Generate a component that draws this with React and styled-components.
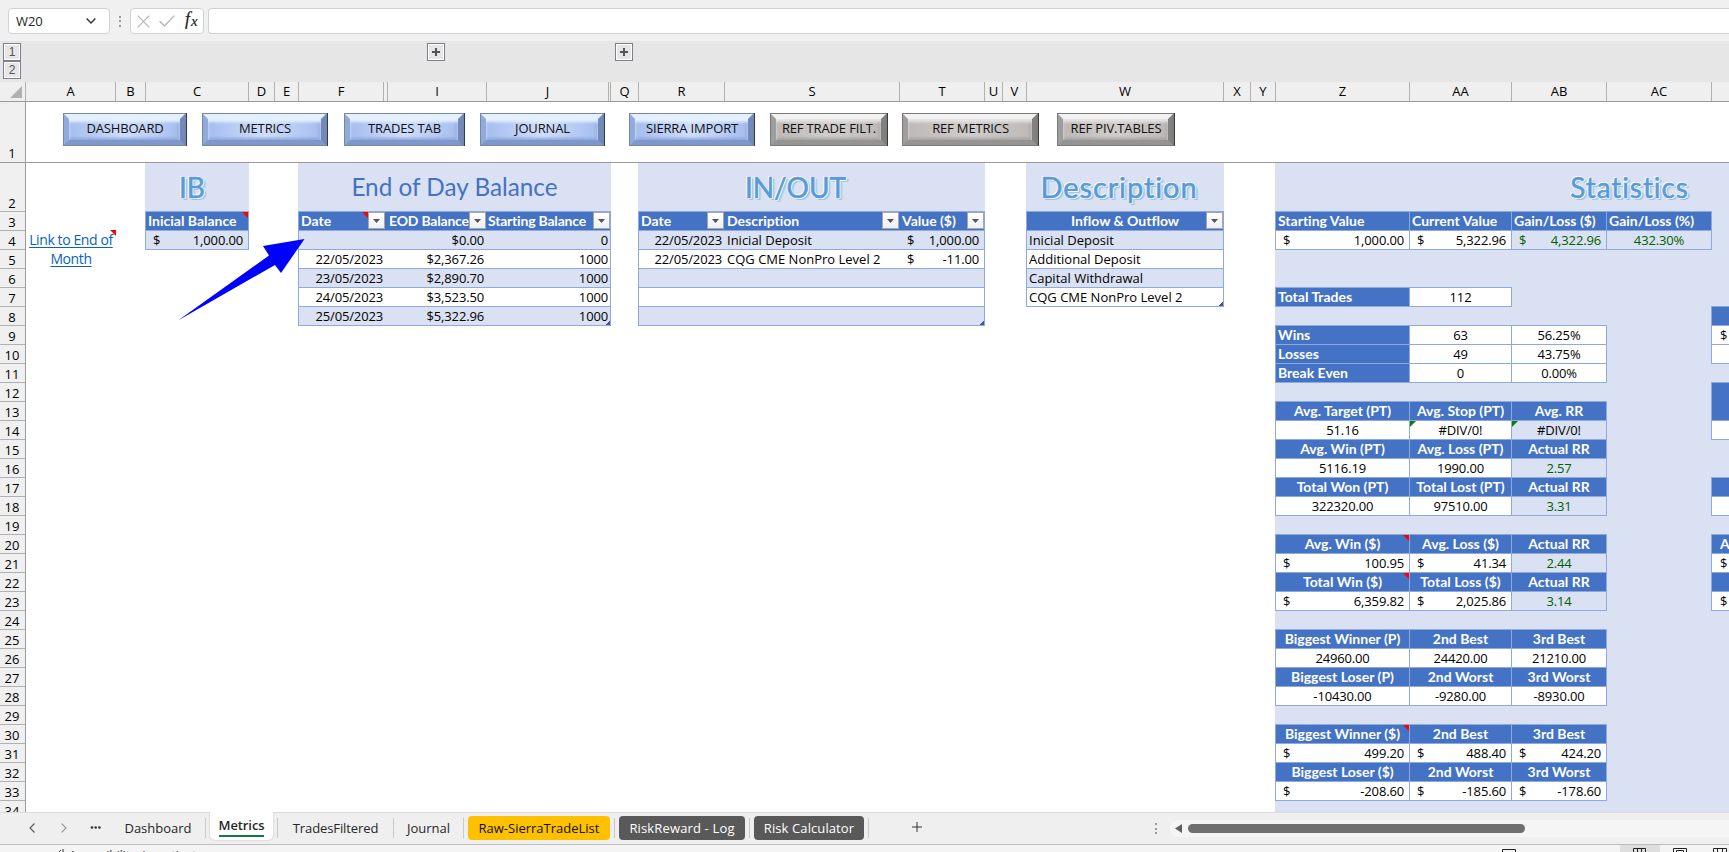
import React from "react";
import styled, { createGlobalStyle, css } from "styled-components";

const BLUE = "#4472c4";
const PALE = "#d9e1f2";
const LINE = "#8ea9db";

const GlobalStyle = createGlobalStyle`
  * { box-sizing: border-box; }
  body {
    margin: 0;
    overflow: hidden;
    background: #fff;
    font-family: "Open Sans", "Noto Sans", sans-serif;
    font-size: 13px;
    color: #000;
  }
`;

const Window = styled.div`
  display: flex;
  flex-direction: column;
  width: 100vw;
  height: 852px;
  overflow: hidden;
`;

/* formula bar */
const FormulaBar = styled.div`
  display: flex;
  height: 41px;
  flex: none;
  padding: 8px 0 7px 8px;
  background: #f0f0f0;
`;
const Field = styled.div`
  display: flex;
  align-items: center;
  justify-content: space-between;
  width: ${({ $w }) => $w}px;
  flex: none;
  height: 26px;
  background: #fff;
  border: 1px solid #d1d1d1;
  border-radius: 4px;
`;
const NameBox = styled(Field)`
  padding: 0 13px 0 7px;
  font-size: 13px;
  letter-spacing: -0.1px;
  color: #262626;
`;
const FxBox = styled(Field)`
  padding: 0 4px 0 6px;
`;
const FormulaInput = styled(Field)`
  flex: 1;
  margin-left: 4px;
  border-right: none;
  border-radius: 4px 0 0 4px;
`;
const Grip = styled.div`
  display: flex;
  flex-direction: column;
  justify-content: center;
  align-items: center;
  gap: 2.5px;
  width: ${({ $w }) => $w}px;
  flex: none;
  i {
    width: 2px;
    height: 2px;
    background: #999;
  }
`;

/* outline strip over the column headers */
const Outline = styled.div`
  display: flex;
  align-items: flex-start;
  height: 41px;
  flex: none;
  padding: 2px 0 0 3px;
  background: #e6e6e6;
`;
const Levels = styled.div`
  display: flex;
  flex-direction: column;
  width: 18px;
`;
const OutlineButton = styled.div`
  display: flex;
  align-items: center;
  justify-content: center;
  width: 18px;
  height: 18px;
  flex: none;
  margin-left: ${({ $gap = 0 }) => $gap}px;
  border: 1px solid #7b808a;
  box-shadow: inset 0 0 0 1px #fff;
  font: 12px "Liberation Sans", sans-serif;
  color: #555;
`;

const columns = "25px 1px 90px 30px 103px 26px 24px 85px 4px 99px 122px 2px 28px 86px 175px 85px 18px 24px 197px 27px 25px 134px 102px 95px 105px 90px";

const ColumnHeads = styled.div`
  display: grid;
  grid-template-columns: ${columns};
  height: 20px;
  flex: none;
  background: #efefef;
  border-bottom: 1px solid #9b9b9b;
`;
const ColumnHead = styled.div`
  text-align: center;
  line-height: 19px;
  border-right: 1px solid #b1b1b1;
  overflow: hidden;
`;
const Corner = styled.div`
  grid-column: span 2;
  display: flex;
  justify-content: flex-end;
  align-items: flex-end;
  padding: 0 3px 3px 0;
  border-right: 1px solid #b1b1b1;
`;

const FrozenRow = styled.div`
  display: flex;
  height: 61px;
  flex: none;
  border-bottom: 1px solid #9b9b9b;
`;
const RowHead = styled.div`
  display: flex;
  align-items: flex-end;
  justify-content: center;
  width: 26px;
  flex: none;
  height: ${({ $h = 19 }) => $h}px;
  padding-right: 1px;
  line-height: 18px;
  background: #f0f0f0;
  border-right: 1px solid #9b9b9b;
  border-bottom: ${({ $frozen }) => ($frozen ? "none" : "1px solid #b1b1b1")};
  span { margin-bottom: ${({ $frozen }) => ($frozen ? 0 : -1)}px; }
`;
const ButtonStrip = styled.div`
  display: flex;
  align-items: flex-start;
  padding: 11px 0 0 37px;
`;
const tones = {
  blue: css`
    background: linear-gradient(90deg, #a5bdee, #d0defb 50%, #a5bdee);
    border-color: #e2f0ff #7189bb #7f98cb #92abde;
    box-shadow: 0 0 0 1px #7c869a, 1px 0 0 1px #2e3b55, inset 0 3px 3px #e6f0ff, inset -2px -2px 3px #8da7dc;
  `,
  grey: css`
    background: linear-gradient(90deg, #bcb9b8, #d0cdcc 50%, #bcb9b8);
    border-color: #f2f2f2 #838180 #969493 #a09e9d;
    box-shadow: 0 0 0 1px #7a7a7a, 1px 0 0 1px #3c3c3c, inset 0 3px 3px #e6e4e4, inset -2px -2px 3px #a5a3a2;
  `,
};
const BevelButton = styled.button`
  width: ${({ $w }) => $w - 3}px;
  height: 31px;
  margin: 1px 2px 0 ${({ $gap }) => $gap + 1}px;
  padding: 0 0 2px 1px;
  border: 5px solid;
  font: 13px "Open Sans", sans-serif;
  letter-spacing: -0.15px;
  line-height: 19px;
  white-space: nowrap;
  color: #111;
  ${({ $tone }) => tones[$tone]}
`;

/* sheet */
const SheetArea = styled.div`
  position: relative;
  display: flex;
  height: 649px;
  flex: none;
  overflow: hidden;
`;
const RowHeads = styled.div`
  display: flex;
  flex-direction: column;
  flex: none;
`;
const Sheet = styled.div`
  display: grid;
  flex: none;
  grid-template-columns: ${columns.replace("25px 1px ", "")};
  grid-template-rows: 49px repeat(32, 19px);
`;
const Shade = styled.div`
  grid-column: ${({ $c }) => $c};
  grid-row: ${({ $r }) => $r};
  margin-left: -1px;
  background: ${PALE};
`;
const Title = styled.div`
  grid-column: ${({ $c }) => $c};
  grid-row: 1;
  display: flex;
  align-items: center;
  justify-content: center;
  margin-left: -1px;
  padding: 0 ${({ $pr = 0 }) => $pr}px 2px 0;
  background: ${PALE};
  font-family: Lato, sans-serif;
  font-size: ${({ $size }) => $size}px;
  font-variant-ligatures: none;
  letter-spacing: ${({ $ls = 0 }) => $ls}px;
  white-space: nowrap;
  color: ${BLUE};
  ${({ $art }) => $art && css`
    color: #5b9bd5;
    -webkit-text-stroke: 0.6px #5b9bd5;
    text-shadow: 1px 0 #fff, -1px 0 #fff, 0 1px #fff, 0 -1px #fff, 1px 1px #fff, -1px -1px #fff,
      2px 2px 0 #9dc3e6, 3px 2px 0 #b4d2ee;
  `}
`;
const fills = { head: BLUE, white: "#fff", pale: PALE };
const Cell = styled.div`
  position: relative;
  grid-column: ${({ $c }) => $c};
  grid-row: ${({ $r }) => $r};
  display: flex;
  align-items: center;
  justify-content: ${({ $align }) => ({ left: "flex-start", right: "flex-end", center: "center", money: "space-between" })[$align]};
  margin: -1px 0 0 -1px;
  padding: ${({ $align }) => ($align === "money" ? "0 5px 0 7px" : "0 2px")};
  background: ${({ $fill }) => fills[$fill]};
  border: 1px solid ${LINE};
  ${({ $open = "", $align }) => $open.includes("l") && css`
    border-left: none;
    padding-left: ${$align === "money" ? 8 : 3}px;
  `}
  ${({ $open = "", $pr = 3 }) => $open.includes("r") && css`
    border-right: none;
    padding-right: ${$pr}px;
  `}
  line-height: 18px;
  white-space: nowrap;
  color: ${({ $green }) => ($green ? "#006100" : "#000")};
  ${({ $align }) => $align !== "left" && css`letter-spacing: -0.15px;`}
  ${({ $fill, $tight }) => $fill === "head" && css`
    color: #fff;
    font: bold 14px/18px Lato, sans-serif;
    font-variant-ligatures: none;
    letter-spacing: ${$tight ? -0.2 : 0}px;
  `}
  ${({ $tight }) => $tight && css`padding-left: 2px;`}
`;
const Note = styled.i`
  position: absolute;
  top: 0;
  right: ${({ $right = 0 }) => $right}px;
  border-top: 6px solid #f00;
  border-left: 6px solid transparent;
`;
const ErrorMark = styled.i`
  position: absolute;
  top: 0;
  left: 0;
  border-top: 6px solid #0a7d0a;
  border-right: 6px solid transparent;
`;
const ResizeMark = styled.i`
  position: absolute;
  right: 0;
  bottom: 0;
  width: 4px;
  height: 4px;
  background: linear-gradient(135deg, transparent 45%, #3f51b5 45%);
`;
const FilterBox = styled.span`
  position: absolute;
  top: 0;
  right: ${({ $right = 0 }) => $right}px;
  display: flex;
  align-items: center;
  justify-content: center;
  width: 17px;
  height: 17px;
  background: linear-gradient(#fff, #eef0f4);
  border: 1px solid #a6a6a6;
`;
const EndLink = styled.a`
  position: relative;
  grid-column: 1;
  grid-row: 3 / span 2;
  margin-top: -1px;
  text-align: center;
  font: 14px/19px "Open Sans", sans-serif;
  letter-spacing: -0.4px;
  color: #0563c1;
  text-decoration: underline;
  text-underline-offset: 2px;
`;
const Pointer = styled.svg`
  position: absolute;
  left: 170px;
  top: 67px;
`;

/* tab bar */
const TabBar = styled.div`
  display: flex;
  height: 33px;
  flex: none;
  background: #efefef;
  border-top: 1px solid #dcdcdc;
  border-bottom: 1px solid #bdbdbd;
`;
const TabNav = styled.div`
  display: flex;
  align-items: center;
  gap: 26px;
  width: 115px;
  padding: 0 0 2px 29px;
  flex: none;
  svg:last-child { margin-left: -2px; }
`;
const Tab = styled.div`
  display: flex;
  align-items: center;
  justify-content: center;
  width: ${({ $w }) => $w}px;
  flex: none;
  height: 24px;
  margin-top: 3px;
  border-radius: 4px;
  white-space: nowrap;
  letter-spacing: ${({ $ls = 0 }) => $ls}px;
  background: ${({ $bg = "transparent" }) => $bg};
  color: ${({ $fg = "#262626" }) => $fg};
`;
const ActiveTab = styled.div`
  display: flex;
  justify-content: center;
  width: 63px;
  flex: none;
  height: 28px;
  margin-top: -1px;
  background: #fff;
  border-radius: 0 0 5px 5px;
  box-shadow: 0 0 2px #bbb;
  clip-path: inset(0 -3px -3px);
  span {
    height: 25px;
    border-bottom: 2px solid #107c41;
    font-weight: 600;
    font-size: 13px;
    line-height: 26px;
    letter-spacing: -0.1px;
    color: #262626;
  }
`;
const TabLine = styled.i`
  width: 1px;
  flex: none;
  height: 20px;
  margin: 5px 4px 0;
  background: #c8c8c8;
`;
const AddTab = styled.div`
  display: flex;
  align-items: center;
  width: 280px;
  padding: 0 0 3px 39px;
`;
const Scroll = styled.div`
  display: flex;
  align-items: center;
  flex: 1;
  height: 17px;
  margin: 7px 0 0 11px;
  padding-left: 5px;
  gap: 6px;
  background: #f5f5f5;
  border-radius: 8px 0 0 8px;
`;
const Thumb = styled.div`
  width: 337px;
  height: 9px;
  border-radius: 4.5px;
  background: #707070;
`;
const Status = styled.div`
  display: flex;
  justify-content: space-between;
  height: 7px;
  overflow: hidden;
  background: #f4f4f4;
`;
const StatusText = styled.div`
  display: flex;
  gap: 5px;
  padding: 2px 0 0 56px;
  font-size: 12px;
  line-height: 17px;
  color: #333;
`;
const Views = styled.div`
  display: flex;
`;
const View = styled.div`
  width: ${({ $w = 40 }) => $w}px;
  padding: 3px 0 0 ${({ $pl = 13 }) => $pl}px;
  background: ${({ $on }) => ($on ? "#dedede" : "none")};
  svg { display: block; }
`;

const Filter = ({ right }) => (
  <FilterBox $right={right}>
    <svg width="7" height="4" viewBox="0 0 7 4"><path d="M0 0h7L3.5 4z" fill="#555" /></svg>
  </FilterBox>
);

const heads = ["A", "B", "C", "D", "E", "F", "", "I", "J", "", "Q", "R", "S", "T", "U", "V", "W", "X", "Y", "Z", "AA", "AB", "AC", ""];

const buttons = [
  ["DASHBOARD", 124, 0, "blue"],
  ["METRICS", 126, 15, "blue"],
  ["TRADES TAB", 121, 16, "blue"],
  ["JOURNAL", 125, 15, "blue"],
  ["SIERRA IMPORT", 126, 24, "blue"],
  ["REF TRADE FILT.", 118, 15, "grey"],
  ["REF METRICS", 137, 14, "grey"],
  ["REF PIV.TABLES", 118, 18, "grey"],
];

const balances = [
  ["", "$0.00", "0"],
  ["22/05/2023", "$2,367.26", "1000"],
  ["23/05/2023", "$2,890.70", "1000"],
  ["24/05/2023", "$3,523.50", "1000"],
  ["25/05/2023", "$5,322.96", "1000"],
];

const flows = [
  ["22/05/2023", "Inicial Deposit", "1,000.00"],
  ["22/05/2023", "CQG CME NonPro Level 2", "-11.00"],
  ["", "", ""],
  ["", "", ""],
  ["", "", ""],
];

const kinds = ["Inicial Deposit", "Additional Deposit", "Capital Withdrawal", "CQG CME NonPro Level 2"];

// [sheet row, type, Z, AA, AB]
const stats = [
  [13, "head", "Avg. Target (PT)", "Avg. Stop (PT)", "Avg. RR"],
  [14, "error", "51.16", "#DIV/0!", "#DIV/0!"],
  [15, "head", "Avg. Win (PT)", "Avg. Loss (PT)", "Actual RR"],
  [16, "ratio", "5116.19", "1990.00", "2.57"],
  [17, "head", "Total Won (PT)", "Total Lost (PT)", "Actual RR"],
  [18, "ratio", "322320.00", "97510.00", "3.31"],
  [20, "note", "Avg. Win ($)", "Avg. Loss ($)", "Actual RR"],
  [21, "moneyRatio", "100.95", "41.34", "2.44"],
  [22, "note", "Total Win ($)", "Total Loss ($)", "Actual RR"],
  [23, "moneyRatio", "6,359.82", "2,025.86", "3.14"],
  [25, "head", "Biggest Winner (P)", "2nd Best", "3rd Best"],
  [26, "plain", "24960.00", "24420.00", "21210.00"],
  [27, "head", "Biggest Loser (P)", "2nd Worst", "3rd Worst"],
  [28, "plain", "-10430.00", "-9280.00", "-8930.00"],
  [30, "note", "Biggest Winner ($)", "2nd Best", "3rd Best"],
  [31, "money", "499.20", "488.40", "424.20"],
  [32, "head", "Biggest Loser ($)", "2nd Worst", "3rd Worst"],
  [33, "money", "-208.60", "-185.60", "-178.60"],
];

const results = [
  ["Wins", "63", "56.25%"],
  ["Losses", "49", "43.75%"],
  ["Break Even", "0", "0.00%"],
];

// first visible pixels of the next block, column AD
const edge = [
  [8, "head", ""], [9, "white", "$"], [10, "white", ""],
  [14, "white", ""], [17, "head", ""], [18, "white", ""],
  [20, "head", "A"], [21, "white", "$"], [22, "head", ""], [23, "white", "$"],
];
const EdgeCell = styled(Cell)`
  padding-left: 8px;
`;

function Money({ children }) {
  return <><span>$</span><span>{children}</span></>;
}

function StatRow({ row, type, values }) {
  const isHead = type === "head" || type === "note";
  return values.map((value, i) => {
    const shaded = i === 2 && ["error", "ratio", "moneyRatio"].includes(type);
    const money = type === "money" || (type === "moneyRatio" && i < 2);
    return (
      <Cell
        key={i}
        $c={20 + i}
        $r={row - 1}
        $align={money ? "money" : "center"}
        $fill={isHead ? "head" : shaded ? "pale" : "white"}
        $green={shaded && type !== "error"}
      >
        {money ? <Money>{value}</Money> : value}
        {type === "note" && i === 0 && <Note />}
        {type === "error" && i > 0 && <ErrorMark />}
      </Cell>
    );
  });
}

function EndOfDay() {
  return (
    <>
      <Title $c="6 / 11" $size={24.3}>End of Day Balance</Title>
      <Cell $c="6 / 8" $r={2} $fill="head" $align="left" $open="r">Date<Note $right={20} /><Filter right={3} /></Cell>
      <Cell $c="8" $r={2} $fill="head" $align="left" $open="lr" $tight>EOD Balance<Filter right={1} /></Cell>
      <Cell $c="9 / 11" $r={2} $fill="head" $align="left" $open="l" $tight>Starting Balance<Filter /></Cell>
      {balances.map(([date, eod, start], i) => {
        const fill = i % 2 ? "white" : "pale";
        return (
          <React.Fragment key={i}>
            <Cell $c="6 / 8" $r={3 + i} $fill={fill} $align="right" $open="r" $pr={5}>{date}</Cell>
            <Cell $c="8" $r={3 + i} $fill={fill} $align="right" $open="lr">{eod}</Cell>
            <Cell $c="9 / 11" $r={3 + i} $fill={fill} $align="right" $open="l">{start}{i === 4 && <ResizeMark />}</Cell>
          </React.Fragment>
        );
      })}
    </>
  );
}

function InOut() {
  return (
    <>
      <Title $c="12 / 15" $size={28} $art $pr={32}>IN/OUT</Title>
      <Cell $c="12" $r={2} $fill="head" $align="left" $open="r">Date<Filter right={1} /></Cell>
      <Cell $c="13" $r={2} $fill="head" $align="left" $open="lr">Description<Filter right={1} /></Cell>
      <Cell $c="14" $r={2} $fill="head" $align="left" $open="l">Value ($)<Filter /></Cell>
      {flows.map(([date, text, value], i) => {
        const fill = i % 2 ? "white" : "pale";
        return (
          <React.Fragment key={i}>
            <Cell $c="12" $r={3 + i} $fill={fill} $align="right" $open="r">{date}</Cell>
            <Cell $c="13" $r={3 + i} $fill={fill} $align="left" $open="lr">{text}</Cell>
            <Cell $c="14" $r={3 + i} $fill={fill} $align="money" $open="l">
              {value && <Money>{value}</Money>}
              {i === 4 && <ResizeMark />}
            </Cell>
          </React.Fragment>
        );
      })}
    </>
  );
}

function Statistics() {
  return (
    <>
      <Shade $c="20 / 25" $r="1 / 34" />
      <Title $c="22 / 25" $size={28} $ls={0.9} $art $pr={54}>Statistics</Title>
      <Cell $c="20" $r={2} $fill="head" $align="left">Starting Value</Cell>
      <Cell $c="21" $r={2} $fill="head" $align="left">Current Value</Cell>
      <Cell $c="22" $r={2} $fill="head" $align="left">Gain/Loss ($)</Cell>
      <Cell $c="23" $r={2} $fill="head" $align="left">Gain/Loss (%)</Cell>
      <Cell $c="20" $r={3} $fill="white" $align="money"><Money>1,000.00</Money></Cell>
      <Cell $c="21" $r={3} $fill="white" $align="money"><Money>5,322.96</Money></Cell>
      <Cell $c="22" $r={3} $fill="pale" $align="money" $green><Money>4,322.96</Money></Cell>
      <Cell $c="23" $r={3} $fill="pale" $align="center" $green>432.30%</Cell>
      <Cell $c="20" $r={6} $fill="head" $align="left">Total Trades</Cell>
      <Cell $c="21" $r={6} $fill="white" $align="center">112</Cell>
      {results.map(([label, count, share], i) => (
        <React.Fragment key={label}>
          <Cell $c="20" $r={8 + i} $fill="head" $align="left">{label}</Cell>
          <Cell $c="21" $r={8 + i} $fill="white" $align="center">{count}</Cell>
          <Cell $c="22" $r={8 + i} $fill="white" $align="center">{share}</Cell>
        </React.Fragment>
      ))}
      {stats.map(([row, type, ...values]) => <StatRow key={row} row={row} type={type} values={values} />)}
      <EdgeCell $c="24" $r="11 / 13" $fill="head" $align="left" />
      {edge.map(([row, fill, text]) => (
        <EdgeCell key={row} $c="24" $r={row - 1} $fill={fill} $align="left">{text}</EdgeCell>
      ))}
    </>
  );
}

export default function App() {
  return (
    <>
      <GlobalStyle />
      <Window>
        <FormulaBar>
          <NameBox $w={102}>
            W20
            <svg width="10" height="6" viewBox="0 0 10 6" fill="none" stroke="#333" strokeWidth="1.4"><path d="M.6.6 5 5 9.4.6" /></svg>
          </NameBox>
          <Grip $w={20}><i /><i /><i /></Grip>
          <FxBox $w={74}>
            <svg width="13" height="13" viewBox="0 0 13 13" stroke="#b5b5b5" strokeWidth="1.2"><path d="M.7.7l11.6 11.6M12.3.7.7 12.3" /></svg>
            <svg width="16" height="12" viewBox="0 0 16 12" fill="none" stroke="#b5b5b5" strokeWidth="1.3"><path d="M.6 6.2 5.4 11 15.4.6" /></svg>
            <svg width="16" height="20" viewBox="0 0 16 20" overflow="visible">
              <text x="2" y="14" fontFamily="Liberation Serif, serif" fontStyle="italic" fontSize="18" fill="#222" stroke="#222" strokeWidth=".2">f</text>
              <text x="8" y="15" fontFamily="Liberation Serif, serif" fontStyle="italic" fontSize="15" fill="#222" stroke="#222" strokeWidth=".2">x</text>
            </svg>
          </FxBox>
          <FormulaInput />
        </FormulaBar>

        <Outline>
          <Levels>
            <OutlineButton>1</OutlineButton>
            <OutlineButton>2</OutlineButton>
          </Levels>
          {[406, 170].map(gap => (
            <OutlineButton key={gap} $gap={gap}>
              <svg width="8" height="8" viewBox="0 0 8 8" stroke="#555" strokeWidth="2"><path d="M4 0v8M0 4h8" /></svg>
            </OutlineButton>
          ))}
        </Outline>

        <ColumnHeads>
          <Corner><svg width="12" height="12"><path d="M12 0v12H0z" fill="#b1b1b1" /></svg></Corner>
          {heads.map((name, i) => <ColumnHead key={i}>{name}</ColumnHead>)}
        </ColumnHeads>

        <FrozenRow>
          <RowHead $h={60} $frozen><span>1</span></RowHead>
          <ButtonStrip>
            {buttons.map(([label, w, gap, tone]) => (
              <BevelButton key={label} $w={w} $gap={gap} $tone={tone}>{label}</BevelButton>
            ))}
          </ButtonStrip>
        </FrozenRow>

        <SheetArea>
          <RowHeads>
            <RowHead $h={49}><span>2</span></RowHead>
            {Array.from({ length: 32 }, (_, i) => <RowHead key={i}><span>{i + 3}</span></RowHead>)}
          </RowHeads>
          <Sheet>
            <EndLink>Link to End of Month<Note /></EndLink>
            <Title $c="3" $size={28} $art $pr={10}>IB</Title>
            <Cell $c="3" $r={2} $fill="head" $align="left">Inicial Balance<Note /></Cell>
            <Cell $c="3" $r={3} $fill="pale" $align="money"><Money>1,000.00</Money></Cell>
            <EndOfDay />
            <InOut />
            <Title $c="17" $size={29} $ls={0.9} $art $pr={12}>Description</Title>
            <Cell $c="17" $r={2} $fill="head" $align="center">Inflow &amp; Outflow<Filter /></Cell>
            {kinds.map((text, i) => (
              <Cell key={text} $c="17" $r={3 + i} $fill={i % 2 ? "white" : "pale"} $align="left">
                {text}{i === 3 && <ResizeMark />}
              </Cell>
            ))}
            <Statistics />
          </Sheet>
          <Pointer width="140" height="96" viewBox="170 230 140 96">
            <path d="M304.500 239 263 246 269 255.500 178 320.500 275 265 281 273z" fill="#00f" />
          </Pointer>
        </SheetArea>

        <TabBar>
          <TabNav>
            <svg width="6" height="10" viewBox="0 0 6 10" fill="none" stroke="#555" strokeWidth="1.1"><path d="M5.500.5 1 5l4.500 4.500" /></svg>
            <svg width="6" height="10" viewBox="0 0 6 10" fill="none" stroke="#999" strokeWidth="1.1"><path d="M.5.5 5 5 .5 9.500" /></svg>
            <svg width="10" height="3" viewBox="0 0 10 3" fill="#333" overflow="visible"><circle cx="1" cy="1.500" r="1.300" /><circle cx="4.700" cy="1.500" r="1.300" /><circle cx="8.400" cy="1.500" r="1.300" /></svg>
          </TabNav>
          <Tab $w={86}>Dashboard</Tab>
          <TabLine />
          <ActiveTab><span>Metrics</span></ActiveTab>
          <TabLine />
          <Tab $w={107} $ls={-0.1}>TradesFiltered</Tab>
          <TabLine />
          <Tab $w={61}>Journal</Tab>
          <TabLine />
          <Tab $w={142} $bg="#ffc000" $fg="#111">Raw-SierraTradeList</Tab>
          <TabLine />
          <Tab $w={126} $bg="#595959" $fg="#fff" $ls={0.15}>RiskReward - Log</Tab>
          <TabLine />
          <Tab $w={110} $bg="#595959" $fg="#fff" $ls={0.1}>Risk Calculator</Tab>
          <TabLine />
          <AddTab>
            <svg width="10" height="10" viewBox="0 0 10 10" stroke="#333" strokeWidth="1"><path d="M5 0v10M0 5h10" /></svg>
          </AddTab>
          <Grip $w={6}><i /><i /><i /></Grip>
          <Scroll>
            <svg width="7" height="9" viewBox="0 0 7 9"><path d="M7 0v9L0 4.500z" fill="#606060" /></svg>
            <Thumb />
          </Scroll>
        </TabBar>

        <Status>
          <StatusText>
            <svg width="8" height="14" viewBox="0 0 8 14" fill="none" stroke="#333"><path d="M1 7 5 3M7 2v8" /></svg>
            Accessibility: Investigate
          </StatusText>
          <Views>
            <View $w={118} $pl={0}><svg width="14" height="8" fill="none" stroke="#222"><path d="M.5 8V1.500h13V8" /></svg></View>
            <View $on><svg width="13" height="8" fill="none" stroke="#222"><path d="M.5 8V.5h12V8M4.500 0v8M8.500 0v8M0 4.500h13" /></svg></View>
            <View><svg width="14" height="8" fill="none" stroke="#222"><path d="M.5 8V.5h13V8M3.500 8V2.500h7V8M5 5.500h4" /></svg></View>
            <View $w={29}><svg width="14" height="8" fill="none" stroke="#222"><path d="M.5 8V.5h13V8M4.500 0v4M9.500 0v4M0 4.500h13" /></svg></View>
          </Views>
        </Status>
      </Window>
    </>
  );
}
